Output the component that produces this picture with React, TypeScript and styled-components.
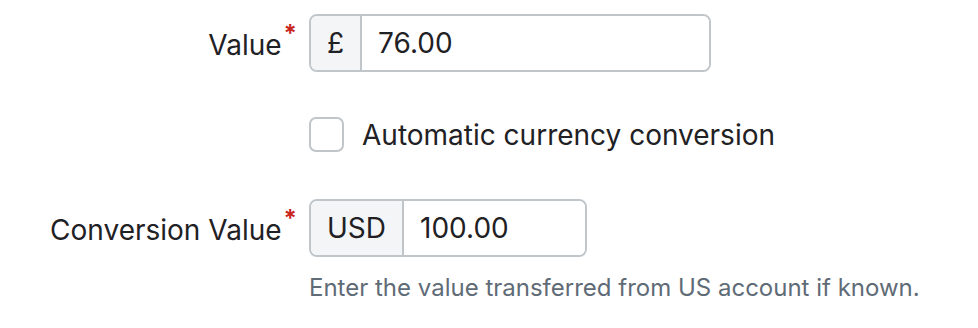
import React from 'react'
import styled, { createGlobalStyle } from 'styled-components'

const GlobalStyle = createGlobalStyle`
  body {
    margin: 0;
    background: #ffffff;
    font-family: Inter, "Noto Sans", sans-serif;
    color: #1f2124;
  }
`

const Form = styled.div`
  display: grid;
  grid-template-columns: 297px auto;
  column-gap: 12px;
  padding-top: 14px;
`

const Label = styled.label`
  display: flex;
  justify-content: flex-end;
  align-items: center;
  font-size: 28px;
  color: #1f2124;
  white-space: nowrap;
  padding-top: 4px;
`

const Required = styled.span`
  color: #c8261f;
  font-size: 24px;
  font-weight: 700;
  line-height: 1;
  align-self: flex-start;
  margin-top: 4px;
  margin-left: 2px;
`

const Field = styled.div<{ $width: number }>`
  display: flex;
  width: ${({ $width }) => $width}px;
  height: 58px;
  border: 2px solid #c0c5ca;
  border-radius: 8px;
  box-sizing: border-box;
  overflow: hidden;
`

const Addon = styled.div`
  display: flex;
  align-items: center;
  padding: 0 16px;
  background: #f4f5f7;
  border-right: 2px solid #c0c5ca;
  font-size: 28px;
  color: #1f2124;
`

const Input = styled.input`
  flex: 1;
  min-width: 0;
  border: none;
  outline: none;
  padding: 0 16px;
  font-family: inherit;
  font-size: 28px;
  color: #1f2124;
  background: #ffffff;
`

const CheckRow = styled.label`
  grid-column: 2;
  display: flex;
  align-items: center;
  gap: 18px;
  margin: 45px 0 47px;
  font-size: 28px;
  color: #1f2124;
`

const Box = styled.span`
  width: 35px;
  height: 35px;
  border: 2px solid #c0c5ca;
  border-radius: 7px;
  box-sizing: border-box;
  background: #ffffff;
`

const Help = styled.div`
  grid-column: 2;
  margin-top: 16px;
  font-size: 24px;
  color: #5f6b76;
`

const App: React.FC = () => {
  return (
    <>
      <GlobalStyle />
      <Form>
        <Label>
          Value<Required>*</Required>
        </Label>
        <Field $width={402}>
          <Addon>£</Addon>
          <Input defaultValue="76.00" />
        </Field>

        <CheckRow>
          <Box />
          Automatic currency conversion
        </CheckRow>

        <Label>
          Conversion Value<Required>*</Required>
        </Label>
        <Field $width={278}>
          <Addon>USD</Addon>
          <Input defaultValue="100.00" />
        </Field>
        <Help>Enter the value transferred from US account if known.</Help>
      </Form>
    </>
  )
}

export default App
